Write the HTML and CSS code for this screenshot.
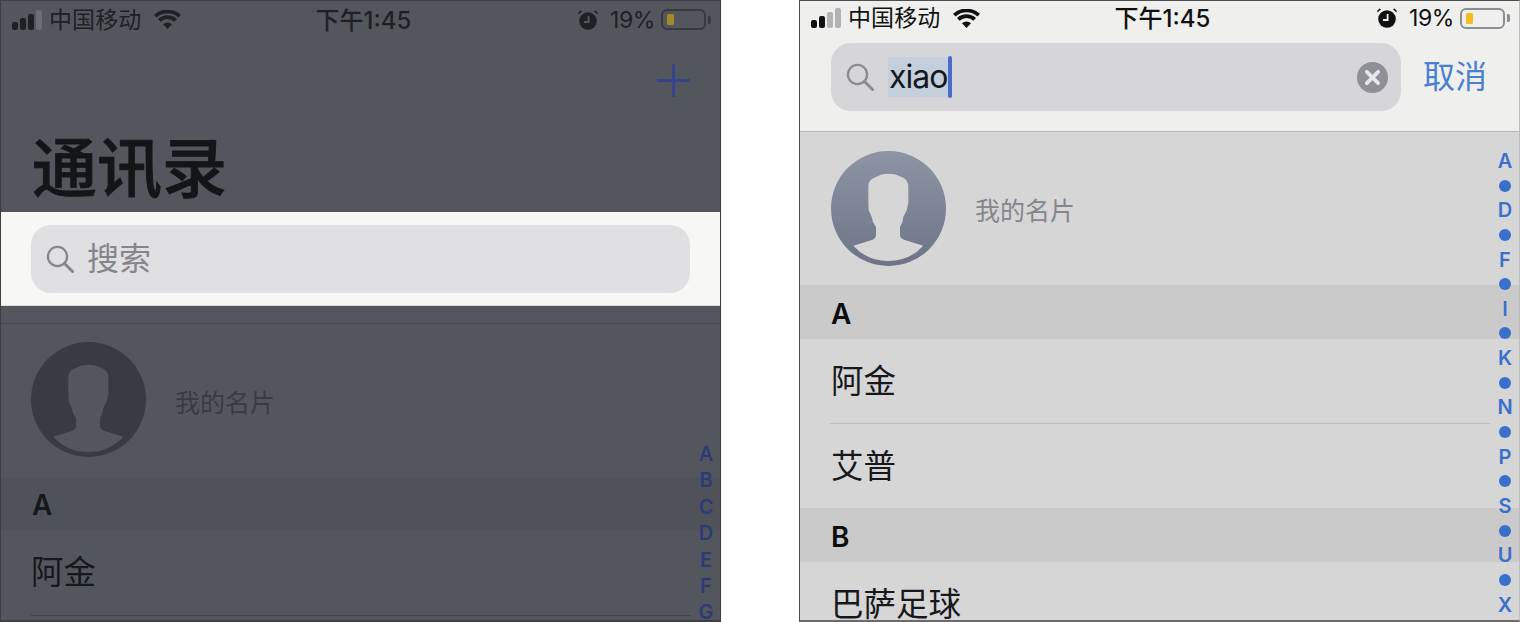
FILE: index.html
```html
<!DOCTYPE html>
<html lang="zh">
<head>
<meta charset="utf-8">
<title>通讯录</title>
<link rel="stylesheet" href="styles.css">
</head>
<body>
<svg class="defs" width="0" height="0" aria-hidden="true">
  <defs>
    <symbol id="wifi" viewBox="0 0 27 19">
      <path d="M13.5 19 9 14.2a6.6 6.6 0 0 1 9 0Z"/>
      <path d="M6.6 11.7 4 9a14 14 0 0 1 19 0l-2.6 2.7a10.3 10.3 0 0 0-13.8 0Z"/>
      <path d="M2.5 7.4 0 4.8a20 20 0 0 1 27 0l-2.5 2.6a16.4 16.4 0 0 0-22 0Z"/>
    </symbol>
    <symbol id="alarm" viewBox="0 0 20 20">
      <circle cx="10" cy="11" r="8.8"/>
      <path d="M0.6 4.6 4 1.2 2.6.4.2 2.8Z M19.4 4.6 16 1.2 17.4.4 19.8 2.8Z"/>
      <path class="alarm-hand" d="M10.6 6v6H6" fill="none" stroke-width="1.8"/>
    </symbol>
    <symbol id="person" viewBox="0 0 345 345">
      <path d="M67 284 125 266Q135 262 135 252V228Q124 215 122 198L113 178 112 155V105Q112 85 135 78 150 68 172 68 195 68 212 78 232 86 232 108V155L227 178 217 198Q216 215 207 228V252Q207 262 219 266L277 284Q235 330 172 330 108 330 67 284Z"/>
    </symbol>
    <symbol id="search" viewBox="0 0 28 28">
      <circle cx="11.5" cy="11.5" r="9.6" fill="none" stroke-width="2.3"/>
      <path d="M18.5 18.5 26.5 26.5" fill="none" stroke-width="3" stroke-linecap="round"/>
    </symbol>
  </defs>
</svg>

<main class="page">
  <section class="phone phone-dim">
    <div class="status">
      <div class="status-left">
        <span class="signal"><i class="b1"></i><i class="b2"></i><i class="b3"></i><i class="b4 off"></i></span>
        <span class="carrier">中国移动</span>
        <svg class="wifi"><use href="#wifi"/></svg>
      </div>
      <div class="time">下午1:45</div>
      <div class="status-right">
        <svg class="alarm"><use href="#alarm"/></svg>
        <span class="pct">19%</span>
        <span class="battery"><i></i></span><span class="nub"></span>
      </div>
    </div>
    <div class="nav"><span class="plus"></span></div>
    <h1 class="title">通讯录</h1>
    <div class="search-band">
      <div class="field">
        <svg class="search-icon"><use href="#search"/></svg>
        <span class="placeholder">搜索</span>
      </div>
    </div>
    <div class="gap-bar"></div>
    <div class="profile">
      <span class="avatar"><svg><use href="#person"/></svg></span>
      <span class="mine">我的名片</span>
    </div>
    <div class="section">A</div>
    <div class="row">阿金</div>
    <div class="rule"></div>
    <nav class="index index-dim">
      <span>A</span><span>B</span><span>C</span><span>D</span><span>E</span><span>F</span><span>G</span>
    </nav>
  </section>

  <section class="phone phone-light">
    <header class="head">
      <div class="status">
        <div class="status-left">
          <span class="signal"><i class="b1"></i><i class="b2"></i><i class="b3 off"></i><i class="b4 off"></i></span>
          <span class="carrier">中国移动</span>
          <svg class="wifi"><use href="#wifi"/></svg>
        </div>
        <div class="time">下午1:45</div>
        <div class="status-right">
          <svg class="alarm"><use href="#alarm"/></svg>
          <span class="pct">19%</span>
          <span class="battery"><i></i></span><span class="nub"></span>
        </div>
      </div>
      <div class="search-line">
        <div class="field field-active">
          <svg class="search-icon"><use href="#search"/></svg>
          <span class="query">xiao</span><span class="caret"></span>
          <span class="clear">
            <svg viewBox="0 0 30 30"><path d="M9.5 9.5 20.5 20.5M20.5 9.5 9.5 20.5"/></svg>
          </span>
        </div>
        <span class="cancel">取消</span>
      </div>
    </header>
    <div class="profile">
      <span class="avatar"><svg><use href="#person"/></svg></span>
      <span class="mine">我的名片</span>
    </div>
    <div class="section">A</div>
    <div class="row">阿金</div>
    <div class="rule"></div>
    <div class="row">艾普</div>
    <div class="section">B</div>
    <div class="row">巴萨足球</div>
    <nav class="index index-light">
      <span>A</span><b></b><span>D</span><b></b><span>F</span><b></b><span>I</span><b></b><span>K</span><b></b><span>N</span><b></b><span>P</span><b></b><span>S</span><b></b><span>U</span><b></b><span>X</span>
    </nav>
  </section>
</main>
</body>
</html>
```

FILE: styles.css
```css
* { box-sizing: border-box; }
html, body { margin: 0; padding: 0; background: #fff; }
body { font-family: Inter, "Noto Sans CJK SC", sans-serif; overflow: hidden; }
.defs { position: absolute; }

.page { display: flex; gap: 78px; height: 622px; }

.phone {
  position: relative;
  width: 721px;
  height: 622px;
  overflow: hidden;
  display: flex;
  flex-direction: column;
  flex: none;
}

/* variant colours */
.phone-dim {
  background: #54565e;
  border: 1px solid #3c3e44;
  border-bottom: 2px solid #3c3e44;
  color: #17181b;
}
.phone-light {
  background: #d6d6d6;
  border: 1px solid #4d4d4d;
  border-bottom: 2px solid #6a6a6a;
  border-right-color: #bcbcbc;
  color: #111;
}

/* status bar */
.status {
  display: grid;
  grid-template-columns: 1fr auto 1fr;
  align-items: center;
  height: 36px;
  padding: 0 9px 4px 11px;
  font-size: 23px;
  line-height: 32px;
}
.phone-dim .status { height: 40px; padding-top: 1px; color: #1f2024; }
.status-left, .status-right { display: flex; align-items: center; }
.status-right { justify-content: flex-end; }
.signal { display: flex; align-items: flex-end; gap: 2px; width: 31px; height: 20px; flex: none; }
.signal i { display: block; width: 6px; background: currentColor; border-radius: 2px; }
.signal .b1 { height: 8px; }
.signal .b2 { height: 12px; }
.signal .b3 { height: 16px; }
.signal .b4 { height: 20px; }
.signal .off { background: #b3b3b5; }
.phone-dim .signal .off { background: #6d6e74; }
.carrier { margin-left: 6px; letter-spacing: 0.1px; }
.wifi { width: 27px; height: 19px; margin-left: 13px; fill: currentColor; }
.time { margin: 2px 0 0 4px; font-weight: 500; font-size: 24px; }
.alarm { width: 20px; height: 20px; fill: currentColor; --hand: #efefee; }
.phone-dim .alarm { --hand: #54565e; }
.alarm-hand { stroke: var(--hand); }
.pct { margin-left: 12px; font-size: 23px; letter-spacing: -0.4px; }
.battery {
  display: block;
  width: 45px;
  height: 21px;
  margin-left: 6px;
  padding: 3px 4px;
  border: 2px solid #8d8d8f;
  border-radius: 6px;
}
.phone-dim .battery { border-color: #38393f; }
.battery i { display: block; width: 7px; height: 100%; background: #f2bd1d; border-radius: 1.5px; }
.phone-dim .battery i { background: #a58a2b; }
.nub { display: block; width: 3px; height: 8px; margin-left: 2px; background: #8d8d8f; border-radius: 0 2px 2px 0; }
.phone-dim .nub { background: #38393f; }

/* left nav + title */
.nav { height: 62px; display: flex; justify-content: flex-end; align-items: center; padding-right: 30px; padding-top: 17px; }
.plus {
  display: block;
  width: 33px;
  height: 33px;
  background:
    linear-gradient(#34448c, #34448c) center / 100% 3px no-repeat,
    linear-gradient(#34448c, #34448c) center / 3px 100% no-repeat;
}
.title {
  margin: 0;
  height: 109px;
  padding: 27px 0 0 31px;
  font-size: 65px;
  line-height: 68px;
  font-weight: 500;
  -webkit-text-stroke: 0.8px #141517;
  color: #141517;
  font-family: "Noto Sans CJK SC", sans-serif;
}

/* search */
.search-band {
  height: 94px;
  padding: 13px 30px 12px;
  background: #f7f7f6;
  border-bottom: 1px solid #ddd;
}
.field {
  position: relative;
  display: flex;
  align-items: center;
  height: 68px;
  padding-left: 15px;
  background: #e0e0e3;
  border-radius: 20px;
}
.search-icon { width: 28px; height: 28px; flex: none; stroke: #85868c; }
.placeholder { margin-left: 13px; font-size: 32px; line-height: 44px; color: #85868c; }
.gap-bar { height: 18px; border-bottom: 1px solid #44464c; flex: none; }

.head { height: 131px; flex: none; background: #efefee; border-bottom: 1px solid #b5b5b2; }
.search-line { display: flex; align-items: center; padding: 6px 0 0 31px; }
.field-active { width: 570px; background: #d6d6d9; }
.field-active .search-icon { stroke: #8b8c90; }
.query {
  margin-left: 14px;
  height: 40px;
  padding: 0 1px;
  font-size: 32px;
  letter-spacing: -1px;
  line-height: 40px;
  color: #17181a;
  background: #c4cfde;
}
.caret { width: 4px; height: 42px; background: #4a6bc6; border-radius: 2px; }
.clear {
  position: absolute;
  right: 13px;
  top: 19px;
  width: 31px;
  height: 31px;
  border-radius: 50%;
  background: #8e8f97;
}
.clear svg { display: block; width: 100%; height: 100%; fill: none; stroke: #e6e6e8; stroke-width: 3.6; stroke-linecap: round; }
.cancel { margin: 0 0 0 22px; font-size: 32px; line-height: 44px; color: #4a80d0; }

/* list */
.profile { display: flex; align-items: center; height: 153px; flex: none; padding-left: 31px; }
.phone-dim .profile { padding: 0 0 2px 30px; }
.avatar {
  display: block;
  width: 115px;
  height: 115px;
  border-radius: 50%;
  flex: none;
}
.avatar svg { display: block; width: 100%; height: 100%; }
.phone-dim .avatar { background: #3a3b42; fill: #54565e; }
.phone-light .avatar { background: linear-gradient(#8d95a5, #6d7486); fill: #d6d6d6; }
.mine { margin: 2px 0 0 29px; font-size: 25px; letter-spacing: 0; }
.phone-light .mine { margin-top: 0; }
.phone-dim .mine { color: #3a3b42; }
.phone-light .mine { color: #85868c; }

.section {
  height: 54px;
  flex: none;
  padding-left: 31px;
  font-size: 28px;
  font-weight: 600;
  line-height: 56px;
}
.phone-dim .section { background: #50525a; color: #17181b; }
.phone-light .section { background: #cacaca; color: #0d0d0d; line-height: 58px; }

.row {
  height: 84px;
  flex: none;
  padding-left: 30px;
  font-size: 32.5px;
  line-height: 84px;
  color: #17181b;
}
.phone-light .row { line-height: 86px; padding-left: 31px; }
.rule { height: 1px; flex: none; margin: 0 29px 0 30px; background: #bdbdbd; }
.phone-dim .rule { background: #40424a; }

/* side index */
.index { position: absolute; display: flex; flex-direction: column; align-items: center; font-size: 20px; font-weight: 600; }
.index-dim { top: 440px; right: 0; width: 28px; color: #2c3a78; }
.index-dim span { height: 26.4px; line-height: 26.4px; }
.index-light { top: 148px; right: 0; width: 28px; color: #3a70cc; }
.index-light span, .index-light b { height: 24.65px; line-height: 24.65px; display: block; }
.index-light b { width: 12px; position: relative; }
.index-light b::after {
  content: "";
  position: absolute;
  left: 0;
  top: 6px;
  width: 12px;
  height: 12px;
  border-radius: 50%;
  background: #3a70cc;
}
```
